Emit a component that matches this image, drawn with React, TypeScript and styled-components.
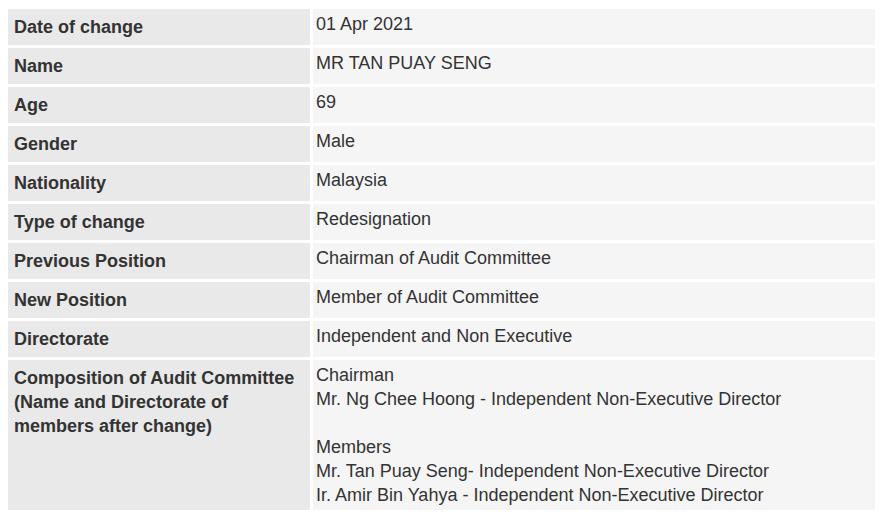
import styled, { createGlobalStyle } from "styled-components";

interface Detail {
  label: string;
  value: string[];
}

const details: Detail[] = [
  { label: "Date of change", value: ["01 Apr 2021"] },
  { label: "Name", value: ["MR TAN PUAY SENG"] },
  { label: "Age", value: ["69"] },
  { label: "Gender", value: ["Male"] },
  { label: "Nationality", value: ["Malaysia"] },
  { label: "Type of change", value: ["Redesignation"] },
  { label: "Previous Position", value: ["Chairman of Audit Committee"] },
  { label: "New Position", value: ["Member of Audit Committee"] },
  { label: "Directorate", value: ["Independent and Non Executive"] },
  {
    label: "Composition of Audit Committee (Name and Directorate of members after change)",
    value: [
      "Chairman",
      "Mr. Ng Chee Hoong - Independent Non-Executive Director",
      "",
      "Members",
      "Mr. Tan Puay Seng- Independent Non-Executive Director",
      "Ir. Amir Bin Yahya - Independent Non-Executive Director",
    ],
  },
];

const GlobalStyle = createGlobalStyle`
  body {
    margin: 0;
    background: #fff;
    font-family: "Liberation Sans", Arial, sans-serif;
  }
`;

const Page = styled.div`
  padding: 6px 0 0 5px;
`;

const Table = styled.table`
  width: 873px;
  border-collapse: separate;
  border-spacing: 3px;
  table-layout: fixed;
  color: #333;
`;

const Label = styled.th`
  width: 290px;
  padding: 6px 6px;
  background: #e9e9e9;
  font-size: 18px;
  font-weight: 700;
  line-height: 24px;
  text-align: left;
  vertical-align: top;
`;

const Value = styled.td`
  padding: 3px 3px 3px;
  background: #f5f5f5;
  font-size: 18px;
  line-height: 24px;
  vertical-align: top;
`;

const Line = styled.div`
  min-height: 24px;
`;

export default function App() {
  return (
    <>
      <GlobalStyle />
      <Page>
        <Table>
          <tbody>
            {details.map((d) => (
              <tr key={d.label}>
                <Label>{d.label}</Label>
                <Value>
                  {d.value.map((line, i) => (
                    <Line key={i}>{line}</Line>
                  ))}
                </Value>
              </tr>
            ))}
          </tbody>
        </Table>
      </Page>
    </>
  );
}
